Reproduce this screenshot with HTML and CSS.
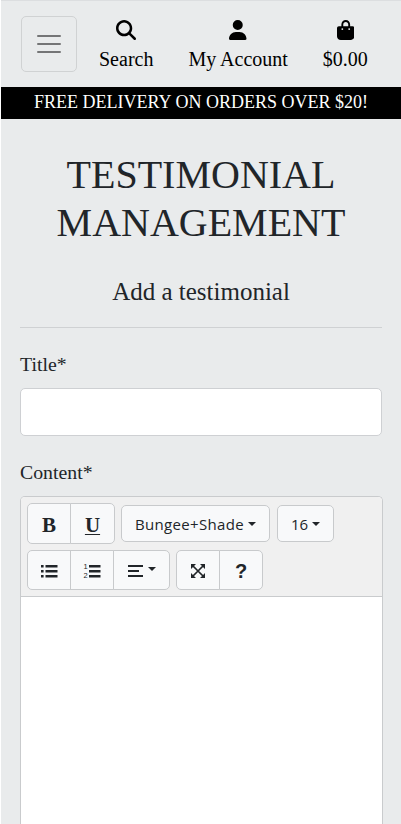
FILE: index.html
```html
<!DOCTYPE html>
<html lang="en">
<head>
<meta charset="utf-8">
<title>Testimonial Management</title>
<link rel="stylesheet" href="styles.css">
</head>
<body>
<header class="topbar">
  <button class="toggler" aria-label="Menu"><svg width="30" height="30" viewBox="0 0 30 30"><path d="M4 7h22M4 15h22M4 23h22" stroke="#747576" stroke-width="2" stroke-linecap="round"/></svg></button>
  <nav class="links">
    <a class="link search"><svg width="20" height="20" viewBox="0 0 512 512"><path d="M416 208c0 45.900-14.900 88.300-40 122.700L502.600 457.400c12.500 12.500 12.500 32.800 0 45.300s-32.800 12.500-45.300 0L330.700 376c-34.400 25.200-76.800 40-122.700 40C93.100 416 0 322.900 0 208S93.100 0 208 0S416 93.100 416 208zM208 352a144 144 0 1 0 0-288a144 144 0 1 0 0 288z"/></svg><span>Search</span></a>
    <a class="link account"><svg width="17.500" height="20" viewBox="0 0 448 512"><path d="M224 256A128 128 0 1 0 224 0a128 128 0 1 0 0 256zm-45.700 48C79.800 304 0 383.800 0 482.300C0 498.700 13.300 512 29.700 512H418.300c16.400 0 29.700-13.300 29.700-29.700C448 383.800 368.200 304 269.700 304H178.300z"/></svg><span>My Account</span></a>
    <a class="link bag"><svg width="17.500" height="20" viewBox="0 0 448 512"><path d="M160 112c0-35.300 28.700-64 64-64s64 28.700 64 64v48H160V112zm-48 48H48c-26.500 0-48 21.500-48 48V416c0 53 43 96 96 96H352c53 0 96-43 96-96V208c0-26.500-21.500-48-48-48H336V112C336 50.100 285.900 0 224 0S112 50.100 112 112v48zm24 48a24 24 0 1 1 0 48 24 24 0 1 1 0-48zm152 24a24 24 0 1 1 48 0 24 24 0 1 1-48 0z"/></svg><span>$0.00</span></a>
  </nav>
</header>
<div class="banner">FREE DELIVERY ON ORDERS OVER $20!</div>
<main class="content">
  <h1>TESTIMONIAL MANAGEMENT</h1>
  <h2>Add a testimonial</h2>
  <hr>
  <form>
    <label for="title">Title*</label>
    <input id="title" type="text">
    <label>Content*</label>
    <div class="editor">
      <div class="toolbar">
        <div class="group tall">
          <button type="button" class="btn bold">B</button><button type="button" class="btn bold"><span class="under">U</span></button>
        </div>
        <div class="group">
          <button type="button" class="btn font"><span class="name">Bungee+Shade</span><i class="caret"></i></button>
        </div>
        <div class="group push">
          <button type="button" class="btn size"><span>16</span><i class="caret"></i></button>
        </div>
        <div class="group lower">
          <button type="button" class="btn" aria-label="Bullets"><svg width="18" height="16" viewBox="0 0 18 16"><path d="M5.500 2h12v2.600h-12zM5.500 7h12v2.600h-12zM5.500 12h12v2.600h-12zM1 2h2.600v2.600H1zM1 7h2.600v2.600H1zM1 12h2.600v2.600H1z" fill="#212529"/></svg></button><button type="button" class="btn" aria-label="Numbers"><svg width="18" height="18" viewBox="0 0 18 18"><path d="M6 3h11.500v2.600H6zM6 8h11.500v2.600H6zM6 13h11.500v2.600H6z" fill="#212529"/><text x="0.500" y="6.800" class="digit">1</text><text x="0.500" y="16" class="digit">2</text></svg></button><button type="button" class="btn align" aria-label="Align"><svg width="17" height="16" viewBox="0 0 17 16"><path d="M1 3h15M1 8h11M1 13h15" stroke="#212529" stroke-width="2.200"/></svg><i class="caret"></i></button>
        </div>
        <div class="group lower">
          <button type="button" class="btn" aria-label="Full screen"><svg width="16" height="16" viewBox="0 0 16 16"><path d="M3 3l10 10M13 3L3 13" stroke="#212529" stroke-width="1.700"/><path d="M1 1h5L1 6zM10 1h5v5zM1 10v5h5zM15 10v5h-5z" fill="#212529"/></svg></button><button type="button" class="btn help">?</button>
        </div>
      </div>
      <div class="editable"></div>
    </div>
  </form>
</main>
</body>
</html>
```
FILE: styles.css
```css
* { box-sizing: border-box; }
html { background: #fff; overflow: hidden; }
body {
  margin: 0 0 0 1px;
  height: 824px;
  overflow: hidden;
  border-top: 1px solid #dcdee0;
  background: #e9ebec;
  color: #212529;
  font: 20px/30px "Liberation Serif", serif;
}
button { font: inherit; color: inherit; }
svg { display: block; }
.topbar { height: 86px; padding: 15px 19px 0 20px; display: flex; align-items: flex-start; }
.toggler {
  width: 56px; height: 56px; padding: 0;
  display: grid; place-items: center;
  border: 1px solid #d0d2d3; border-radius: 5px; background: transparent;
}
.links { display: flex; margin-left: 22px; color: #000; }
.link { display: flex; flex-direction: column; align-items: center; padding-top: 4px; white-space: nowrap; }
.link span { margin-top: 4px; }
.account { margin-left: 35px; }
.bag { margin-left: 35px; }
.banner { height: 32px; background: #000; color: #fff; font-size: 18px; line-height: 31px; text-align: center; white-space: nowrap; }
.content { padding: 32px 19px 0; }
h1 { margin: 0; font-weight: 400; font-size: 40px; line-height: 48px; text-align: center; }
h2 { margin: 30px 0 0; font-weight: 400; font-size: 25px; line-height: 30px; text-align: center; }
hr { margin: 20px 0; border: 0; border-top: 1px solid #cfd1d3; }
label { display: block; height: 30px; padding-top: 1px; font-size: 19.800px; }
input {
  display: block; width: 362px; height: 48px; margin: 10px 0 20px;
  border: 1px solid #ced0d3; border-radius: 5px; background: #fff;
}
.editor { width: 363px; height: 328px; margin-top: 10px; border: 1px solid #c9cbcd; border-bottom: 0; border-radius: 5px 5px 0 0; overflow: hidden; background: #fff; }
.toolbar {
  height: 100px; padding: 6px; display: flex; flex-wrap: wrap; align-content: flex-start; align-items: center; gap: 6px;
  background: #f0f0f0; border-bottom: 1px solid #c9cbcd;
}
.group { display: flex; height: 37px; }
.group.tall { height: 41px; }
.group.lower { height: 40px; }
.group.push { margin-left: 1px; }
.btn {
  width: 44px; height: 100%; padding: 0; margin-left: -1px;
  display: flex; align-items: center; justify-content: center;
  border: 1px solid #c8cacc; background: #f8f9fa;
  font: 15px/24px "Open Sans", sans-serif;
}
.btn:first-child { margin-left: 0; border-radius: 5px 0 0 5px; }
.btn:last-child { border-radius: 0 5px 5px 0; }
.btn:only-child { border-radius: 5px; }
.tall .btn + .btn { width: 45px; }
.btn.bold { padding-top: 2px; font: bold 21px/30px "Liberation Serif", serif; }
.under { text-decoration: underline; text-underline-offset: 2px; text-decoration-thickness: 1px; }
.btn.font { width: 149px; }
.name { letter-spacing: 0.350px; }
.btn.size { width: 57px; }
.btn.align { width: 57px; }
.lower .btn { padding-top: 2px; }
.btn.help { font: bold 20px/24px "Liberation Sans", sans-serif; }
.caret { width: 0; height: 0; margin-left: 4px; border: 4.500px solid transparent; border-top-color: #212529; border-bottom: 0; }
.align .caret { margin: -4px 0 0 4px; }
.align svg { margin-left: -1px; }
.digit { font: 7.500px "Liberation Sans", sans-serif; fill: #212529; }
```
